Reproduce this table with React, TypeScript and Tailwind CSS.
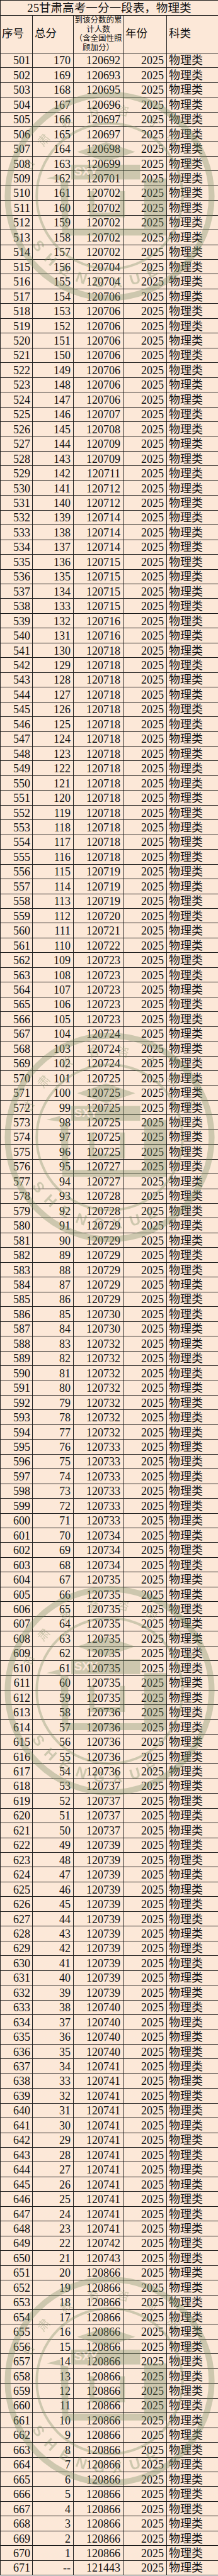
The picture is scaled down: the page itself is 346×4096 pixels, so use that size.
const runs: [number, number][] = [
  [120692, 1], [120693, 1], [120695, 1], [120696, 1], [120697, 2], [120698, 1],
  [120699, 1], [120701, 1], [120702, 5], [120704, 2], [120706, 8], [120707, 1],
  [120708, 1], [120709, 2], [120711, 1], [120712, 2], [120714, 3], [120715, 4],
  [120716, 2], [120718, 15], [120719, 3], [120720, 1], [120721, 1], [120722, 1],
  [120723, 5], [120724, 3], [120725, 6], [120727, 2], [120728, 2], [120729, 6],
  [120730, 2], [120732, 7], [120733, 6], [120734, 3], [120735, 9], [120736, 5],
  [120737, 4], [120739, 11], [120740, 4], [120741, 12], [120742, 1], [120743, 1],
  [120866, 20],
];

type Row = { seq: number; score: string; count: number };

const rows: Row[] = runs
  .flatMap(([value, n]) => Array.from({ length: n }, () => value))
  .map((count, i) => ({ seq: 501 + i, score: String(170 - i), count }));
rows.push({ seq: 671, score: "--", count: 121443 });

// watermark centres, page coords
const sealCenters = [312, 1809, 2689, 3787];
const topText = "甘肃教育咨询服务";
const bottomText = "SHENGXUE";

function Seal({ cy }: { cy: number }) {
  return (
    <g transform={`translate(174 ${cy}) scale(0.782)`} fill="#7a8d62" stroke="#7a8d62">
      <circle r={207} fill="none" strokeWidth={12} />
      <circle r={148} fill="none" strokeWidth={5} />
      {Array.from(topText).map((ch, i) => {
        const a = 201 + i * 19.5;
        const rad = (a * Math.PI) / 180;
        return (
          <text
            key={`t${i}`}
            x={0}
            y={0}
            stroke="none"
            fontSize={24}
            textAnchor="middle"
            dominantBaseline="central"
            fontFamily="'Noto Sans CJK SC', sans-serif"
            transform={`translate(${178 * Math.cos(rad)} ${178 * Math.sin(rad)}) rotate(${a + 90})`}
          >
            {ch}
          </text>
        );
      })}
      {Array.from(bottomText).map((ch, i) => {
        const a = 145 - i * 12;
        const rad = (a * Math.PI) / 180;
        return (
          <text
            key={`b${i}`}
            x={0}
            y={0}
            stroke="none"
            fontSize={30}
            fontWeight={700}
            textAnchor="middle"
            dominantBaseline="central"
            fontFamily="'Liberation Sans', sans-serif"
            transform={`translate(${176 * Math.cos(rad)} ${176 * Math.sin(rad)}) rotate(${a - 90})`}
          >
            {ch}
          </text>
        );
      })}
      <polygon points="-7,-110 52,-90 -7,-70 -66,-90" stroke="none" />
      <rect x={-78} y={-64} width={140} height={30} stroke="none" />
      <text x={-72} y={-42} stroke="none" fill="#fce8d8" fontSize={24} fontWeight={700} fontFamily="'Liberation Sans', sans-serif">
        SXY
      </text>
      <polygon points="-128,-36 -100,-44 -96,80 115,80 115,-36 70,-36 70,66 -84,66 -84,-30" stroke="none" />
      <path d="M-36 -10 V38 H26 V-10" fill="none" strokeWidth={10} />
    </g>
  );
}

const serif = "font-['Liberation_Serif','Noto_Sans_CJK_SC',serif]";
const cell = "flex items-center border-r border-b border-[#1c1c1c]";

export default function App() {
  return (
    <div className={`relative w-[346px] bg-[#fce8d8] text-[#111] ${serif}`}>
      <div className="border-t border-l border-[#1c1c1c]">
        <div className="flex h-[23.5px] items-center justify-center border-b border-[#1c1c1c] pt-[2px] text-[18.6px] leading-none">
          25甘肃高考一分一段表，物理类
        </div>

        <div className="grid h-[60.2px] grid-cols-[51px_65px_79px_69px_1fr] text-[17.5px] leading-none">
          <div className={`${cell} pl-[2px]`}>序号</div>
          <div className={`${cell} pl-[3px]`}>总分</div>
          <div className={`${cell} flex-col justify-center text-center text-[12.5px] leading-[14.6px]`}>
            <span>到该分数的累</span>
            <span>计人数</span>
            <span>（含全国性照</span>
            <span>顾加分）</span>
          </div>
          <div className={`${cell} pl-[3px]`}>年份</div>
          <div className="flex items-center border-b border-[#1c1c1c] pl-[3px]">科类</div>
        </div>

        {rows.map((row) => (
          <div
            key={row.seq}
            className="grid h-[23.46px] grid-cols-[51px_65px_79px_69px_1fr] text-[18px] leading-none"
          >
            <div className={`${cell} justify-end pt-px pr-[3px]`}>{row.seq}</div>
            <div className={`${cell} justify-end pt-px pr-1`}>{row.score}</div>
            <div className={`${cell} justify-end pt-px pr-1`}>{row.count}</div>
            <div className={`${cell} justify-end pt-px pr-1`}>2025</div>
            <div className="flex items-center border-b border-[#1c1c1c] pt-px pl-[3px]">物理类</div>
          </div>
        ))}
      </div>

      <svg
        className="pointer-events-none absolute inset-0 h-full w-full"
        viewBox="0 0 346 4096"
        preserveAspectRatio="none"
        opacity={0.36}
      >
        {sealCenters.map((cy) => (
          <Seal key={cy} cy={cy} />
        ))}
      </svg>
    </div>
  );
}
